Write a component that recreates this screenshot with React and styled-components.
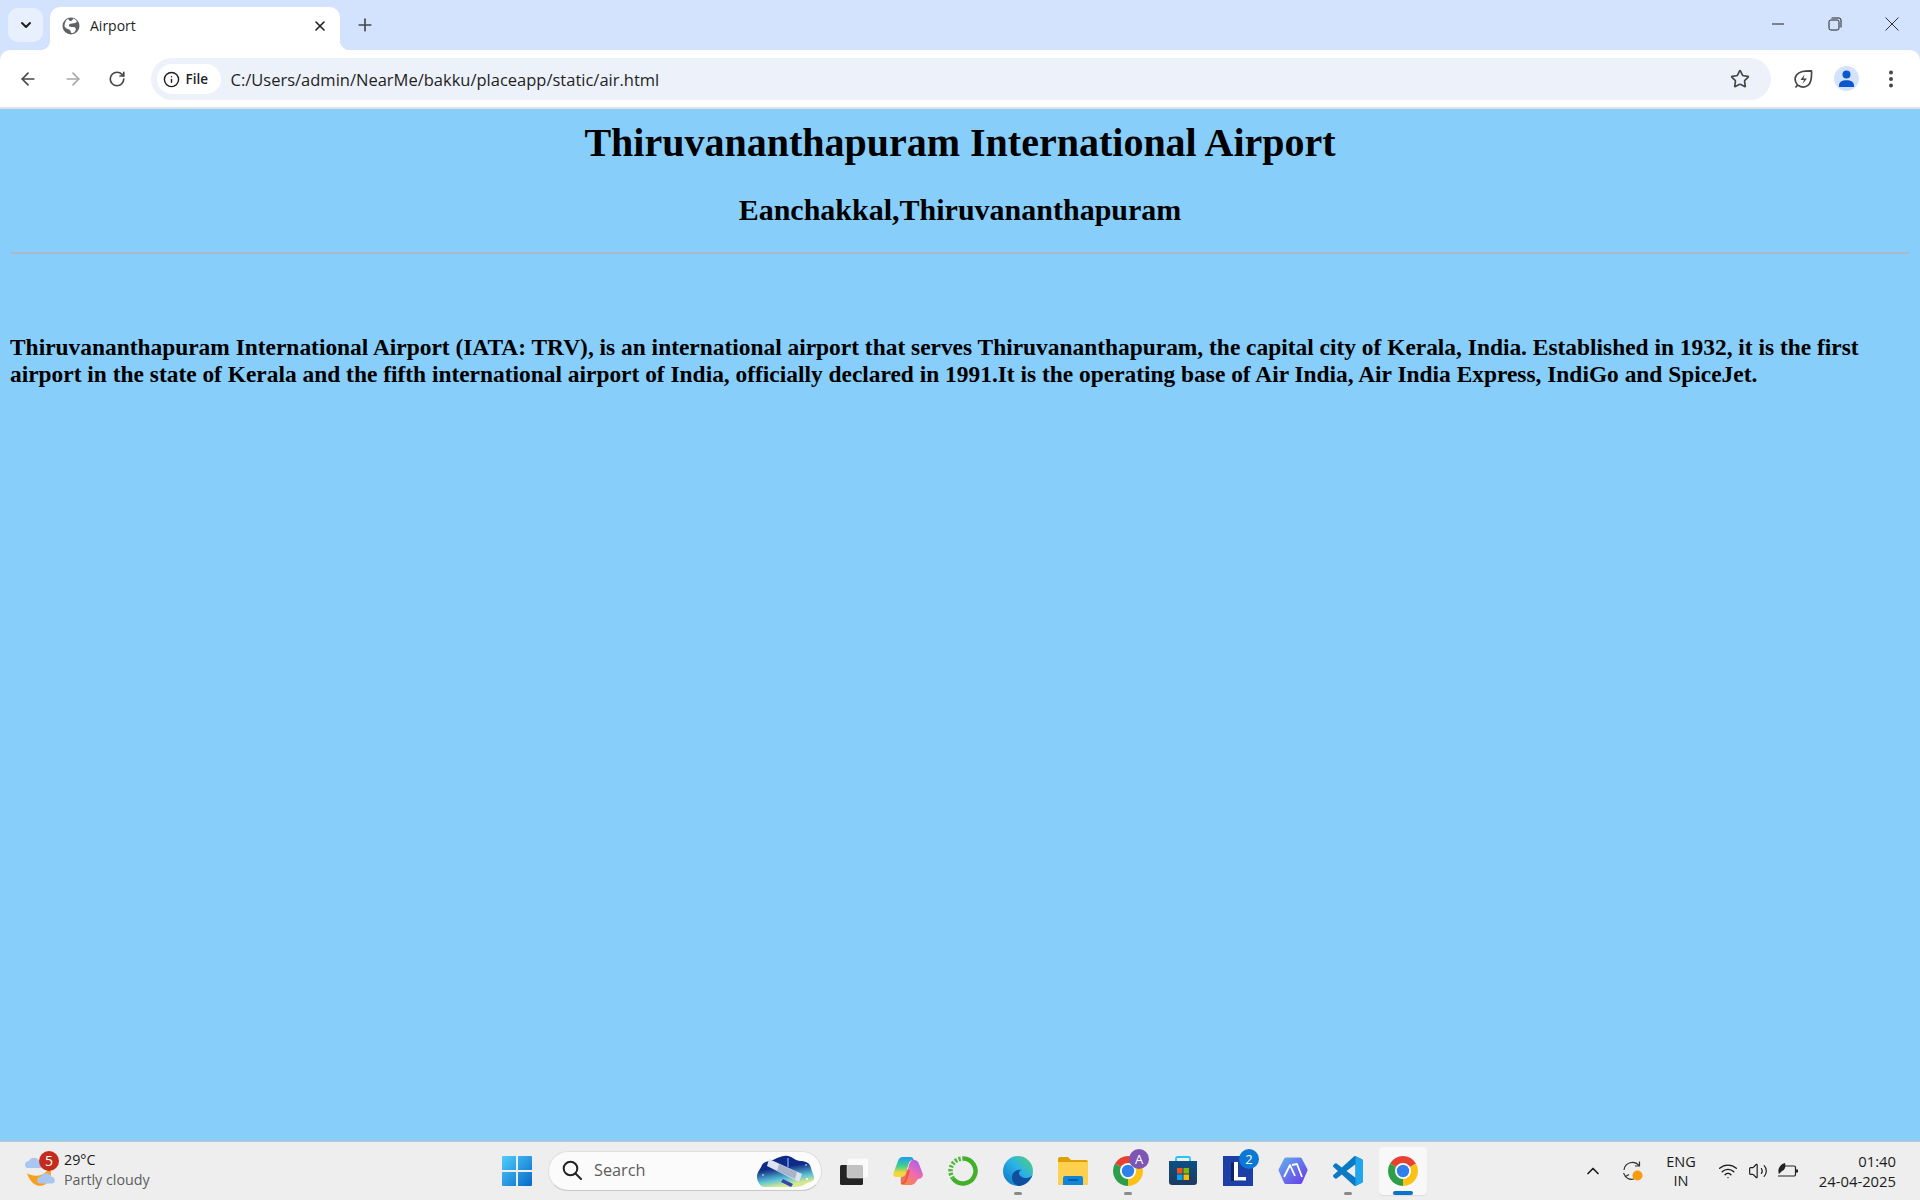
import React from "react";
import styled, { createGlobalStyle } from "styled-components";
import { ChevronDown, X, Plus, ArrowLeft, ArrowRight, RotateCw, Info, Star, ChevronUp, Wifi, Volume2 } from "lucide-react";

const Global = createGlobalStyle`
  html, body { margin: 0; padding: 0; height: 100%; overflow: hidden; }
  #root { height: 100%; }
`;
const Screen = styled.div`
  width: 1920px; height: 1200px; display: flex; flex-direction: column;
  font-family: "Open Sans", "Noto Sans", sans-serif; overflow: hidden;
`;
const TabStrip = styled.div`
  height: 50px; flex: none; background: #d3e3fd; display: flex; align-items: flex-end; padding-left: 8px;
`;
const TabSearch = styled.div`
  width: 35px; height: 34px; margin-bottom: 8px; border-radius: 10px; background: #e9f0fd;
  display: flex; align-items: center; justify-content: center; color: #1f1f1f;
`;
const Tab = styled.div`
  position: relative; width: 290px; height: 43px; margin-left: 7px; background: #fff;
  border-radius: 10px 10px 0 0; display: flex; align-items: center; padding: 0 12px 6px 12px; box-sizing: border-box;
  &::before, &::after { content: ""; position: absolute; bottom: 0; width: 10px; height: 10px; }
  &::before { left: -10px; background: radial-gradient(circle at 0 0, transparent 10px, #fff 10.5px); }
  &::after { right: -10px; background: radial-gradient(circle at 100% 0, transparent 10px, #fff 10.5px); }
`;
const TabTitle = styled.span`
  flex: 1; margin-left: 10px; font-size: 14px; color: #1f1f1f; line-height: 20px;
`;
const NewTab = styled.div`
  width: 30px; height: 30px; margin: 0 0 10px 10px; display: flex; align-items: center; justify-content: center; color: #474747;
`;
const WindowControls = styled.div`
  margin-left: auto; align-self: flex-start; display: flex; height: 50px; align-items: flex-start;
`;
const WinBtn = styled.div`
  width: 57px; height: 48px; display: flex; align-items: center; justify-content: center;
`;
const BackdropStrip = styled.div`
  background: #d3e3fd; flex: none;
`;
const Toolbar = styled.div`
  height: 57px; background: #fff; border-radius: 10px 10px 0 0; display: flex; align-items: center;
  box-sizing: border-box;
`;
const NavGroup = styled.div`
  display: flex; padding-left: 6px; margin-right: 11px;
`;
const NavBtn = styled.div`
  width: 44.5px; height: 36px; display: flex; align-items: center; justify-content: center;
  color: ${p => (p.$off ? "#a8a8a8" : "#474747")};
`;
const Omnibox = styled.div`
  width: 1620px; height: 42px; background: #ecf1fa; border-radius: 21px; display: flex; align-items: center;
  padding: 0 21px 0 6px; box-sizing: border-box; margin-top: 1px; flex: none;
`;
const Chip = styled.div`
  width: 64px; height: 30px; border-radius: 15px; background: #fff; display: flex; align-items: center; padding-left: 6px; box-sizing: border-box;
  gap: 6px; font-size: 13.500px; font-weight: 600; color: #1f1f1f; flex: none;
`;
const Url = styled.div`
  margin-left: 10px; flex: 1; font-size: 16.500px; color: #1f1f1f; white-space: nowrap;
`;
const ToolRight = styled.div`
  display: flex; align-items: center; padding-left: 10px;
`;
const ToolSlot = styled.div`
  width: 44px; height: 36px; display: flex; align-items: center; justify-content: center;
`;
const Avatar = styled.div`
  width: 25px; height: 25px; border-radius: 50%; background: #d3e3fd; display: flex; align-items: center; justify-content: center;
`;
const Shadow = styled.div`
  height: 2px; flex: none; background: #dfe1e5;
`;
const Page = styled.main`
  flex: 1; background: #87cefa; padding: 8px 10px; color: #000; font-family: "Liberation Serif", serif; min-height: 0;
`;
const Title = styled.h1`
  margin: 3px 0 0; text-align: center; font-size: 40px; line-height: 46px; font-weight: 700;
`;
const Subtitle = styled.h2`
  margin: 27px 0 0; text-align: center; font-size: 30px; line-height: 34px; font-weight: 700;
`;
const Rule = styled.hr`
  margin: 25px 0 0; border: none; height: 2px; background: #a9b8cc;
`;
const Body = styled.p`
  margin: 80px 0 0; font-size: 23.420px; line-height: 27px; font-weight: 700;
`;
const Taskbar = styled.footer`
  height: 59px; flex: none; background: #eeeeee; border-top: 1px solid #c4c4c4; box-sizing: border-box; display: flex; align-items: center;
`;
const Weather = styled.div`
  flex: 0 0 493px; display: flex; align-items: center; padding-left: 25px; box-sizing: border-box; gap: 9px;
`;
const WeatherIcon = styled.div`
  position: relative; width: 30px; height: 34px; flex: none;
`;
const AlertBadge = styled.span`
  position: absolute; left: 14px; top: -3px; width: 20px; height: 20px; border-radius: 50%; background: #c42b1c; color: #fff;
  font-size: 14px; line-height: 20px; text-align: center;
`;
const WeatherText = styled.div`
  font-size: 14.300px; line-height: 20px; color: #1b1b1b; margin-top: -2px;
`;
const Muted = styled.div`
  color: #5d5d5d;
`;
const Center = styled.div`
  display: flex; gap: 7px; align-items: center;
`;
const TaskBtn = styled.div`
  position: relative; width: 48px; height: 48px; border-radius: 4px; display: flex; align-items: center; justify-content: center;
  background: ${p => (p.$active ? "#f8f8f8" : "transparent")};
  box-shadow: ${p => (p.$active ? "0 1px 1px rgba(0,0,0,.08)" : "none")};
`;
const RunDot = styled.span`
  position: absolute; bottom: 0; left: 50%; transform: translateX(-50%);
  width: ${p => (p.$active ? "20px" : "8px")}; height: ${p => (p.$active ? "4px" : "3px")}; border-radius: 2px;
  background: ${p => (p.$active ? "#0a74c9" : "#8a8a8a")};
`;
const Badge = styled.span`
  position: absolute; top: 2px; right: 3px; width: 20px; height: 20px; border-radius: 50%; color: #fff; font-size: 13px; line-height: 20px;
  text-align: center; background: ${p => p.$bg};
`;
const SearchBox = styled.div`
  width: 274px; height: 40px; box-sizing: border-box; border: 1px solid #dedede; border-bottom-color: #c8c8c8; border-radius: 20px; background: #fbfbfb;
  display: flex; align-items: center; padding: 0 0 2px 13px; gap: 12px; font-size: 16.300px; color: #5d5d5d;
`;
const SearchArt = styled.div`
  margin: 2px 6px 0 auto; display: flex;
`;
const Tray = styled.div`
  margin-left: auto; display: flex; align-items: center; padding-right: 24px; color: #1b1b1b;
`;
const Slot = styled.div`
  width: ${p => p.$w}px; display: flex; align-items: center; justify-content: center; flex: none;
`;
const Lang = styled.div`
  font-size: 14.500px; line-height: 19px; text-align: center; color: #1b1b1b;
`;
const Clock = styled.div`
  width: 89px; font-size: 14.800px; line-height: 20px; text-align: right; color: #1b1b1b; white-space: nowrap; margin-top: -1px;
`;

const polar = (c, r, a) => [c + r * Math.cos((a * Math.PI) / 180), c + r * Math.sin((a * Math.PI) / 180)];
const sector = (c, r, a, b) => {
  const [x1, y1] = polar(c, r, a);
  const [x2, y2] = polar(c, r, b);
  return `M${c} ${c}L${x1} ${y1}A${r} ${r} 0 0 1 ${x2} ${y2}Z`;
};
const ChromeLogo = () => (
  <svg width="30" height="30" viewBox="0 0 30 30">
    <path d={sector(15, 15, -150, -30)} fill="#e8412f" />
    <path d={sector(15, 15, -30, 90)} fill="#fbc117" />
    <path d={sector(15, 15, 90, 210)} fill="#2f9e4a" />
    <circle cx="15" cy="15" r="8" fill="#fff" />
    <circle cx="15" cy="15" r="6.200" fill="#2f7fec" />
  </svg>
);
const Globe = () => (
  <svg width="18" height="18" viewBox="0 0 18 18">
    <circle cx="9" cy="9" r="8.500" fill="#5f6368" />
    <path d="M11 1.500c1.500.5 3 1.500 4 2.800-.5 1.700-3 2.200-5 2.200-2.200 0-3.500 1-3 2.500 1 1.500 4 .5 6 1.500 1.500 1 1 3.500-1 5-1.500 1-2.500 1-3 0-.5-1.500-.5-2.500-2-3-1.500-.5-3.500-1.500-4.500-3C2.800 4.500 4.500 2.500 6.500 1.800 6.300 3.500 8 4.500 9.500 3.800c1-.5 1.500-1.300 1.500-2.300z" fill="#fff" />
  </svg>
);
const Minimize = () => <svg width="14" height="14" viewBox="0 0 14 14"><path d="M1 7h12" stroke="#222" strokeWidth="1" /></svg>;
const Restore = () => (
  <svg width="14" height="14" viewBox="0 0 14 14" fill="none" stroke="#222" strokeWidth="1">
    <rect x="1" y="3" width="10" height="10" rx="1.800" />
    <path d="M3.500 1h7.500a2 2 0 0 1 2 2v7.500" />
  </svg>
);
const CloseWin = () => <svg width="14" height="14" viewBox="0 0 14 14"><path d="M.5.500l13 13M13.500.500l-13 13" stroke="#333" strokeWidth="1" /></svg>;
const Leaf = () => (
  <svg width="20" height="20" viewBox="0 0 20 20" fill="none" stroke="#474747" strokeWidth="1.700">
    <path d="M2.500 18.500l2-2.500C2 13 1.500 9 3.500 6 6.500 2 12 2 18.500 1.800c.3 6 .2 11-3 14-3 2.700-7 2.700-10.500.5" strokeLinejoin="round" />
    <path d="M11.500 5.500L7.500 11h3.500l-1.500 4 4.500-5.500h-3.500z" fill="#474747" stroke="none" />
  </svg>
);
const Person = () => (
  <svg width="17" height="17" viewBox="0 0 17 17" fill="#0b57d0">
    <circle cx="8.500" cy="4.500" r="4" />
    <path d="M1 15.500c0-3.500 3-5.200 7.500-5.200s7.500 1.700 7.500 5.200V17H1z" />
  </svg>
);
const Dots = () => (
  <svg width="6" height="18" viewBox="0 0 6 18" fill="#474747"><circle cx="3" cy="2.500" r="2" /><circle cx="3" cy="9" r="2" /><circle cx="3" cy="15.500" r="2" /></svg>
);
const WeatherArt = () => (
  <svg width="30" height="34" viewBox="0 0 30 34">
    <path d="M2 19c4 3 11 4 16 1 4-2 6-5 6-8 3 5 3 13-3 18-6 4-15 2-19-11z" fill="#f6a11c" />
    <path d="M0 11a4 4 0 0 1 4-4 5.500 5.500 0 0 1 10 0 3.800 3.800 0 0 1 2 7H3a3 3 0 0 1-3-3z" fill="#a9c6f0" />
    <path d="M12 26a4 4 0 0 1 4-3.500 5.500 5.500 0 0 1 10 0 3.800 3.800 0 0 1 2 7H15a3 3 0 0 1-3-3.500z" fill="#a9c6f0" />
  </svg>
);
const WinLogo = () => (
  <svg width="30" height="30" viewBox="0 0 30 30">
    <defs><linearGradient id="wl" x1="0" y1="0" x2="1" y2="1"><stop offset="0" stopColor="#4fcdfb" /><stop offset="1" stopColor="#0668c9" /></linearGradient></defs>
    <path d="M0 1a1 1 0 0 1 1-1h13v14H0zM16 0h13a1 1 0 0 1 1 1v13H16zM0 16h14v14H1a1 1 0 0 1-1-1zM16 16h14v13a1 1 0 0 1-1 1H16z" fill="url(#wl)" />
  </svg>
);
const SearchGlass = () => (
  <svg width="20" height="20" viewBox="0 0 20 20" fill="none" stroke="#222" strokeWidth="2"><circle cx="8.500" cy="8.500" r="6.800" /><path d="M13.500 13.500l5.500 5.500" strokeLinecap="round" /></svg>
);
const Hubble = () => (
  <svg width="58" height="33" viewBox="0 0 58 33">
    <defs>
      <linearGradient id="hb" x1="0" y1="0" x2="0.300" y2="1"><stop offset=".45" stopColor="#0f2a86" /><stop offset=".8" stopColor="#5cc2d8" /><stop offset="1" stopColor="#d6e88e" /></linearGradient>
    </defs>
    <path d="M0 22c0-5 3-7 5-12 2-4 8-4 11-5 5-2 9-5 15-4 5 1 6 4 12 5 6 0 10 2 11 7s4 8 3 11-5 3-7 4c-4 3-9 4-14 4H7c-3 0-7-5-7-10z" fill="url(#hb)" />
    <path d="M12 4l33 15-3 8L10 11z" fill="#dfe3ee" />
    <path d="M22 9L40 17l-2 7-18-8z" fill="#a9b3c9" />
    <path d="M26 24l10 5-2 3-10-5z" fill="#3347b0" />
    <path d="M31 3v9" stroke="#5a76d8" strokeWidth="2" />
    <circle cx="6" cy="20" r=".800" fill="#fff" /><circle cx="50" cy="24" r="1" fill="#fff" /><circle cx="49" cy="10" r=".800" fill="#fff" />
  </svg>
);
const TaskView = () => (
  <svg width="30" height="30" viewBox="0 0 30 30">
    <rect x="2" y="9" width="23" height="20" rx="1.500" fill="#242424" />
    <rect x="9" y="2" width="22" height="20" rx="1.500" fill="#fff" fillOpacity=".72" stroke="#e2e2e2" strokeWidth=".500" />
  </svg>
);
const Copilot = () => (
  <svg width="30" height="30" viewBox="0 0 30 30">
    <defs>
      <linearGradient id="c1" x1="0.300" y1="0" x2="0.300" y2="1"><stop offset="0" stopColor="#1f9cf0" /><stop offset=".45" stopColor="#3fd08c" /><stop offset=".8" stopColor="#f4d63c" /></linearGradient>
      <linearGradient id="c2" x1="0.800" y1="0" x2="0.200" y2="1"><stop offset="0" stopColor="#a45ff0" /><stop offset=".5" stopColor="#f06cb0" /><stop offset="1" stopColor="#f88a3c" /></linearGradient>
    </defs>
    <path d="M10 1h7.500c2 0 3.200 1.500 3 3-2.500 0-4.300 1.500-5 4L13 17c-.7 2.500-2.500 4-5 4H3c-2 0-3-1.500-2.700-3.500L5 5c.8-2.500 2.500-4 5-4z" fill="url(#c1)" />
    <path d="M21 4c2.500 0 4 1.500 4.800 3.500l3.900 10c.8 3-1.200 5.500-4 5.500h-.7c-2 3-4 6-7 6H11c-2 0-3-1-3.500-2 2.500 0 4-1.500 5-4l3-12c.7-3.500 2.500-7.500 5.500-7.500z" fill="url(#c2)" />
    <path d="M8 21c2.500 0 4.300-1.500 5-4l1-3.500 3 1L14 24c-.7 2.500-2.500 4-5 4.500-1.500-1-1.500-5-1-7.500z" fill="#e8452f" fillOpacity=".75" />
  </svg>
);
const GreenRing = () => (
  <svg width="30" height="30" viewBox="0 0 30 30" fill="none">
    <path d="M15 2.500A12.500 12.500 0 1 1 5 22.500" stroke="#43b02a" strokeWidth="4.500" />
    <path d="M5 22.500A12.500 12.500 0 0 1 15 2.500" stroke="#4cb838" strokeWidth="4.500" strokeDasharray="2.200 1.600" />
  </svg>
);
const Edge = () => (
  <svg width="30" height="30" viewBox="0 0 30 30">
    <defs>
      <linearGradient id="e1" x1="0" y1="1" x2="1" y2="0"><stop offset="0" stopColor="#0a6fc4" /><stop offset=".55" stopColor="#2bb3e6" /><stop offset="1" stopColor="#56d36b" /></linearGradient>
    </defs>
    <circle cx="15" cy="15" r="15" fill="url(#e1)" />
    <path d="M29.500 19c-2 5-7 10.500-13 11-5-.5-8-5-7.500-10 .5-4 5-7 9.500-6-1.500.5-2.500 1.500-2.500 3 0 3.500 4 5 7 5 2.500 0 5-1 6.500-3z" fill="#0f4f9e" />
  </svg>
);
const Folder = () => (
  <svg width="30" height="28" viewBox="0 0 30 28">
    <path d="M0 2a2 2 0 0 1 2-2h8l3 3h15a2 2 0 0 1 2 2v3H0z" fill="#e0a100" />
    <path d="M0 5h30v22a1 1 0 0 1-1 1H1a1 1 0 0 1-1-1z" fill="#fdd04f" />
    <path d="M5 21a2 2 0 0 1 2-2h16a2 2 0 0 1 2 2v7H5z" fill="#0f86d8" />
    <path d="M10 23h10" stroke="#08508f" strokeWidth="1.500" />
  </svg>
);
const Store = () => (
  <svg width="30" height="30" viewBox="0 0 30 30">
    <defs><linearGradient id="st" x1="0" y1="0" x2="0" y2="1"><stop offset="0" stopColor="#0b4f84" /><stop offset="1" stopColor="#1e3a5f" /></linearGradient></defs>
    <path d="M8 6V2.500A1.500 1.500 0 0 1 9.500 1h11A1.500 1.500 0 0 1 22 2.500V6" fill="none" stroke="#28c4f2" strokeWidth="1.800" />
    <path d="M1 5h28v21a3 3 0 0 1-3 3H4a3 3 0 0 1-3-3z" fill="url(#st)" />
    <rect x="9" y="12" width="5.500" height="5.500" fill="#f25022" /><rect x="15.500" y="12" width="5.500" height="5.500" fill="#7fba00" />
    <rect x="9" y="18.500" width="5.500" height="5.500" fill="#00a4ef" /><rect x="15.500" y="18.500" width="5.500" height="5.500" fill="#ffb900" />
  </svg>
);
const LApp = () => (
  <svg width="30" height="30" viewBox="0 0 30 30">
    <rect width="30" height="30" fill="#1c3fa8" />
    <path d="M8 7l4-1v15h8v4H8z" fill="#10245f" />
    <path d="M11 6h4v15h8v3.500H11z" fill="#fff" />
  </svg>
);
const HexApp = () => (
  <svg width="30" height="30" viewBox="0 0 30 30">
    <defs><linearGradient id="hx" x1="0" y1="0" x2="1" y2="1"><stop offset="0" stopColor="#63b2f0" /><stop offset="1" stopColor="#6a35e8" /></linearGradient></defs>
    <path d="M8 1.500h14a2 2 0 0 1 1.800 1l5.500 10.500a2 2 0 0 1 0 2L24 27a2 2 0 0 1-1.800 1H8a2 2 0 0 1-1.800-1L.8 15a2 2 0 0 1 0-2L6.200 2.500a2 2 0 0 1 1.800-1z" fill="url(#hx)" />
    <path d="M6 21l6-12 5 11M14 9l5-1 5 13" fill="none" stroke="#fff" strokeWidth="1.800" strokeLinejoin="round" />
  </svg>
);
const VSCode = () => (
  <svg width="30" height="30" viewBox="0 0 100 100">
    <path fillRule="evenodd" d="M70.900 99.300a6.200 6.200 0 0 0 5-.2l20.600-9.900a6.200 6.200 0 0 0 3.500-5.600V16.400a6.200 6.200 0 0 0-3.500-5.600L75.900.9a6.200 6.200 0 0 0-7.100 1.200L29.400 38 12.200 25c-1.600-1.200-3.800-1.100-5.300.2L1.400 30.300a4.200 4.200 0 0 0 0 6.100L16.300 50 1.400 63.600a4.200 4.200 0 0 0 0 6.100l5.500 5c1.500 1.400 3.700 1.500 5.300.3l17.200-13L68.800 97.900c1.100 1 2.400 1.600 3.800 1.900zM75 27.300 45.100 50 75 72.700z" fill="#0a7ac4" />
    <path d="M75 0.300v27L75 72.700v27a6 6 0 0 0 1-.5l20.500-9.900a6.200 6.200 0 0 0 3.500-5.600V16.400a6.200 6.200 0 0 0-3.500-5.600L76 1z" fill="#20a6ef" />
  </svg>
);
const Sync = () => (
  <svg width="22" height="22" viewBox="0 0 22 22" fill="none" stroke="#333" strokeWidth="1.200">
    <path d="M2 10a8.500 8.500 0 0 1 15-4.500" />
    <path d="M17.500 1.500v4.500h-4.500" />
    <path d="M3 16a8.500 8.500 0 0 0 9 3" />
    <path d="M1.500 13l2 3.500 3.500-2" />
    <circle cx="15.500" cy="15.500" r="5" fill="#f99b0c" stroke="none" />
  </svg>
);
const BatteryLeaf = () => (
  <svg width="22" height="18" viewBox="0 0 22 18" fill="none" stroke="#222" strokeWidth="1.200">
    <path d="M8 4h9a1.500 1.500 0 0 1 1.500 1.500v7a1.500 1.500 0 0 1-1.500 1.500H1" />
    <path d="M20 7.500v3" strokeWidth="2" />
    <path d="M2 12C0 8 3 2 8 1c1 4 0 7-3 8l-3 3z" fill="#222" stroke="none" />
  </svg>
);

const apps = [
  { key: "task", el: <TaskView /> },
  { key: "copilot", el: <Copilot /> },
  { key: "ring", el: <GreenRing /> },
  { key: "edge", el: <Edge />, run: true },
  { key: "folder", el: <Folder /> },
  { key: "chromeA", el: <ChromeLogo />, run: true, badge: "A", bg: "#7d55b5" },
  { key: "store", el: <Store /> },
  { key: "lapp", el: <LApp />, badge: "2", bg: "#0a78d4" },
  { key: "hex", el: <HexApp /> },
  { key: "vscode", el: <VSCode />, run: true },
  { key: "chrome", el: <ChromeLogo />, active: true },
];

export default function App() {
  return (
    <Screen>
      <Global />
      <TabStrip>
        <TabSearch><ChevronDown size={16} strokeWidth={3} /></TabSearch>
        <Tab>
          <Globe />
          <TabTitle>Airport</TabTitle>
          <X size={16} strokeWidth={2.4} color="#1f1f1f" />
        </Tab>
        <NewTab><Plus size={20} strokeWidth={2} /></NewTab>
        <WindowControls>
          <WinBtn><Minimize /></WinBtn>
          <WinBtn><Restore /></WinBtn>
          <WinBtn><CloseWin /></WinBtn>
        </WindowControls>
      </TabStrip>
      <BackdropStrip>
        <Toolbar>
          <NavGroup>
            <NavBtn><ArrowLeft size={20} /></NavBtn>
            <NavBtn $off><ArrowRight size={20} /></NavBtn>
            <NavBtn><RotateCw size={18} strokeWidth={2.2} /></NavBtn>
          </NavGroup>
          <Omnibox>
            <Chip><Info size={17} color="#1f1f1f" />File</Chip>
            <Url>C:/Users/admin/NearMe/bakku/placeapp/static/air.html</Url>
            <Star size={20} color="#474747" strokeWidth={2} />
          </Omnibox>
          <ToolRight>
            <ToolSlot><Leaf /></ToolSlot>
            <ToolSlot><Avatar><Person /></Avatar></ToolSlot>
            <ToolSlot><Dots /></ToolSlot>
          </ToolRight>
        </Toolbar>
      </BackdropStrip>
      <Shadow />
      <Page>
        <Title>Thiruvananthapuram International Airport</Title>
        <Subtitle>Eanchakkal,Thiruvananthapuram</Subtitle>
        <Rule />
        <Body>
          Thiruvananthapuram International Airport (IATA: TRV), is an international airport that serves Thiruvananthapuram, the capital city of Kerala, India. Established in 1932, it is the first airport in the state of Kerala and the fifth international airport of India, officially declared in 1991.It is the operating base of Air India, Air India Express, IndiGo and SpiceJet.
        </Body>
      </Page>
      <Taskbar>
        <Weather>
          <WeatherIcon>
            <WeatherArt />
            <AlertBadge>5</AlertBadge>
          </WeatherIcon>
          <WeatherText>
            29°C
            <Muted>Partly cloudy</Muted>
          </WeatherText>
        </Weather>
        <Center>
          <TaskBtn><WinLogo /></TaskBtn>
          <SearchBox>
            <SearchGlass />
            Search
            <SearchArt><Hubble /></SearchArt>
          </SearchBox>
          {apps.map(a => (
            <TaskBtn key={a.key} $active={a.active}>
              {a.el}
              {a.badge && <Badge $bg={a.bg}>{a.badge}</Badge>}
              {(a.run || a.active) && <RunDot $active={a.active} />}
            </TaskBtn>
          ))}
        </Center>
        <Tray>
          <Slot $w={40}><ChevronUp size={20} strokeWidth={2} /></Slot>
          <Slot $w={40}><Sync /></Slot>
          <Slot $w={56}><Lang>ENG<br />IN</Lang></Slot>
          <Slot $w={38}><Wifi size={20} strokeWidth={1.6} /></Slot>
          <Slot $w={22}><Volume2 size={20} strokeWidth={1.4} /></Slot>
          <Slot $w={38}><BatteryLeaf /></Slot>
          <Clock>01:40<br />24-04-2025</Clock>
        </Tray>
      </Taskbar>
    </Screen>
  );
}
